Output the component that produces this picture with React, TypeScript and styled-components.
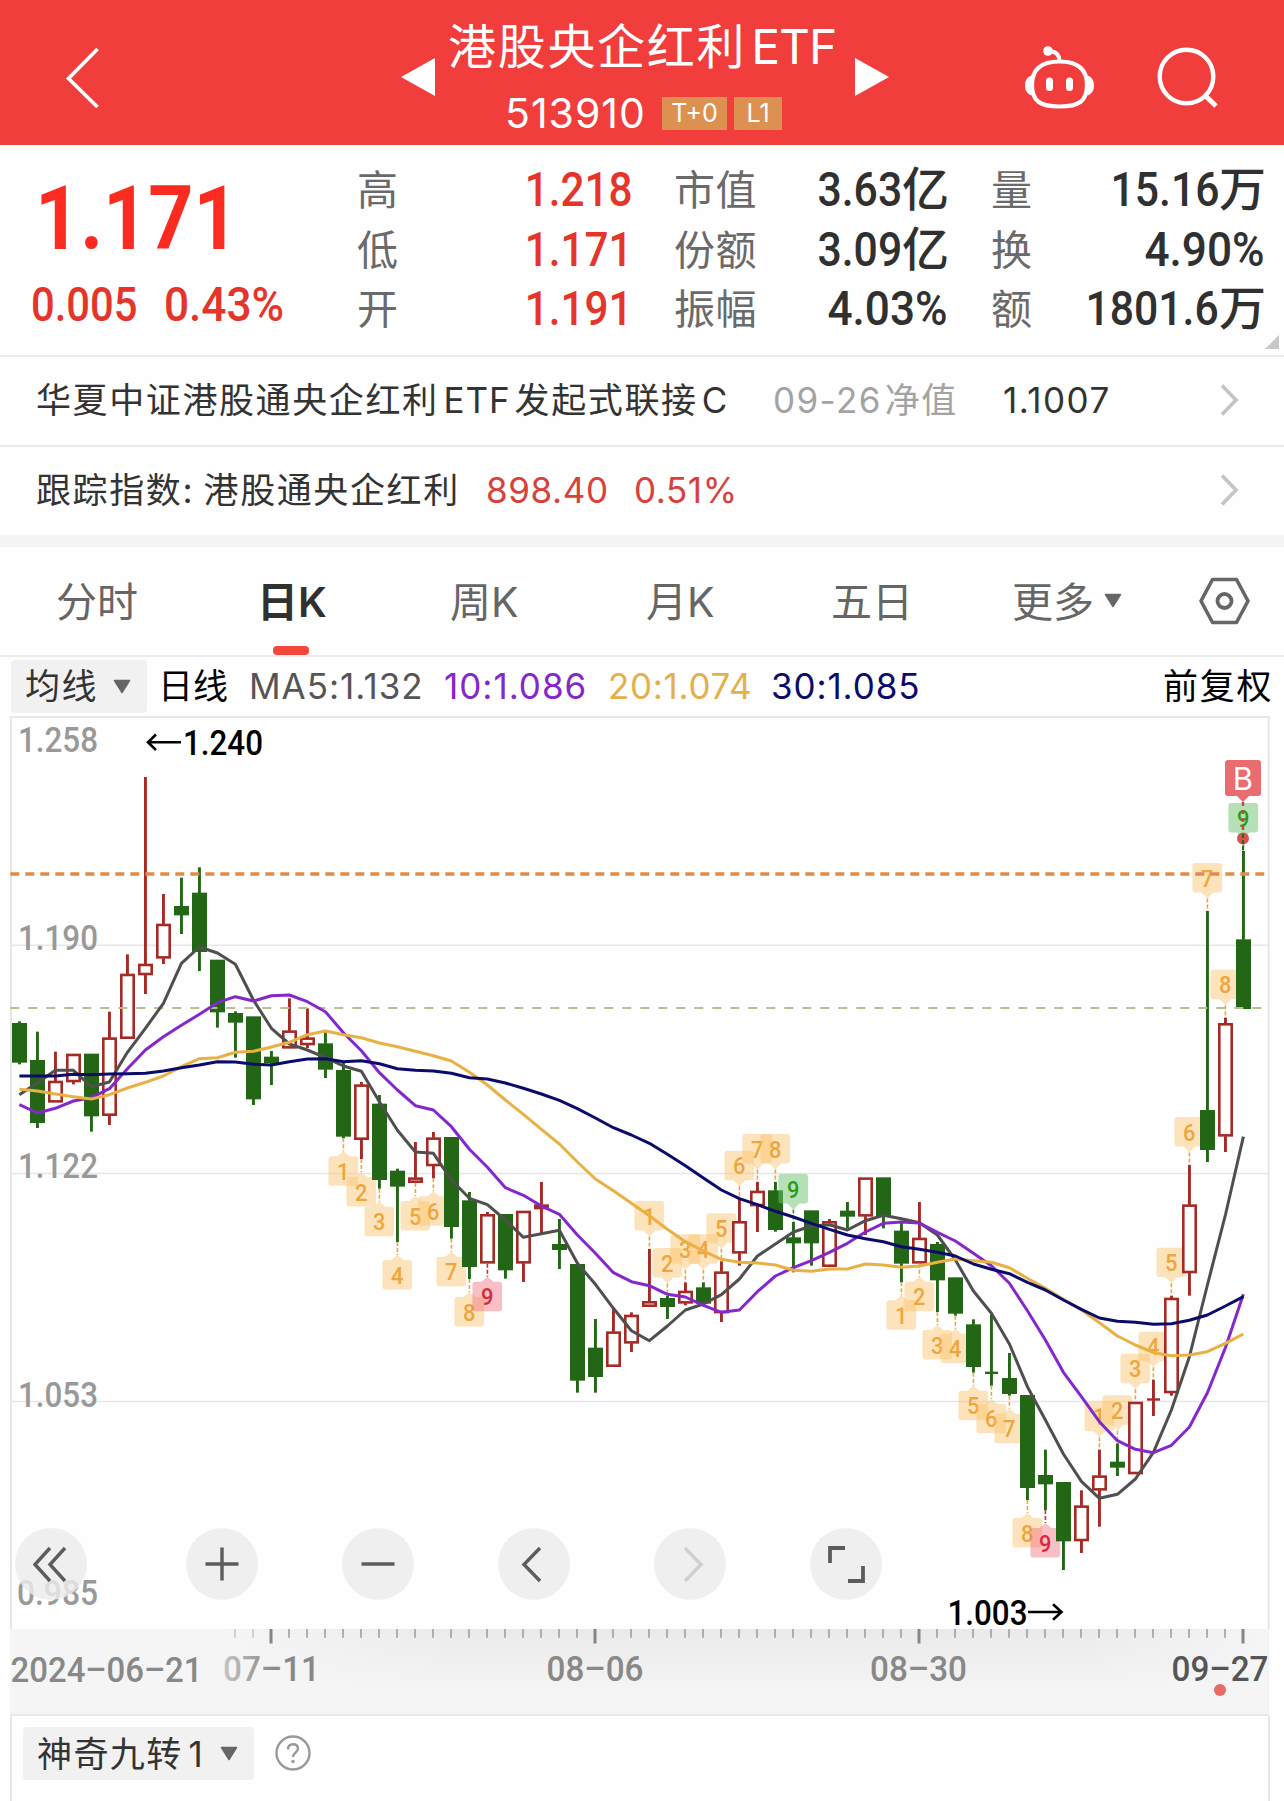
import React from 'react';
import styled, { createGlobalStyle } from 'styled-components';

const UI = `Inter, "Noto Sans CJK SC", sans-serif`;
const NUM = `Roboto, "Noto Sans CJK SC", sans-serif`;
const RED = '#e5352b';

const Global = createGlobalStyle`
  * { box-sizing: border-box; }
  html, body { margin: 0; padding: 0; background: #fefefe; }
  body { font-family: ${UI}; color: #333; }
`;

const Screen = styled.div`
  width: 1284px;
  height: 1801px;
  overflow: hidden;
  display: flex;
  flex-direction: column;
  background: #fefefe;
`;

/* ---------- header ---------- */
const Header = styled.header`
  height: 145px;
  flex: none;
  background: #f13d3c;
  color: #fff;
  display: grid;
  grid-template-columns: 401px 34px 420px 34px 136px 69px 64px 60px;
`;
const HeaderIcon = styled.div<{ $top: number; $left?: number }>`
  padding-top: ${(p) => p.$top}px;
  padding-left: ${(p) => p.$left ?? 0}px;
  svg { display: block; }
`;
const TitleBlock = styled.div`
  padding-left: 13px;
  white-space: nowrap;
`;
const Title = styled.div`
  height: 60px;
  margin-top: 17px;
  line-height: 60px;
  font-size: 48px;
  letter-spacing: 1.7px;
`;
const Latin = styled.span<{ $l: number; $r?: number; $ls?: number }>`
  margin-left: ${(p) => p.$l}px;
  margin-right: ${(p) => p.$r ?? 0}px;
  letter-spacing: ${(p) => p.$ls ?? 0}px;
`;
const CodeRow = styled.div`
  display: grid;
  grid-template-columns: 156px 66px 54px;
  align-items: center;
  height: 33px;
  margin-top: 20px;
  padding-left: 57px;
`;
const Code = styled.div`
  font-size: 41px;
  line-height: 33px;
  letter-spacing: 1px;
`;
const Badge = styled.div`
  height: 33px;
  margin-left: 1px;
  background: #dd9150;
  font-size: 25px;
  line-height: 32px;
  text-align: center;
  & + & { margin-left: 7px; width: 48px; }
`;

/* ---------- quote ---------- */
const Quote = styled.section`
  height: 212px;
  flex: none;
  display: grid;
  grid-template-columns: 357px 275px 42px 274px 43px 274px 1fr;
  border-bottom: 2px solid #ebebeb;
`;
const PriceBlock = styled.div`
  color: ${RED};
  font-family: ${NUM};
  white-space: nowrap;
`;
const Price = styled.div`
  margin: 32px 0 0 35px;
  height: 84px;
  line-height: 84px;
  font-size: 89px;
  font-weight: 700;
  color: #fb2c1f;
  transform: scaleX(0.885);
  transform-origin: 0 50%;
`;
const Changes = styled.div`
  display: grid;
  grid-template-columns: 133px 1fr;
  margin: 20px 0 0 31px;
  height: 48px;
  line-height: 48px;
  font-size: 48px;
  font-weight: 500;
`;
const Digits = styled.span<{ $sx?: number; $origin?: string }>`
  display: inline-block;
  transform: scaleX(${(p) => p.$sx ?? 0.87});
  transform-origin: ${(p) => p.$origin ?? '0'} 50%;
`;
const StatColumn = styled.div`
  padding-top: 15px;
`;
const Stat = styled.div`
  display: flex;
  justify-content: space-between;
  height: 59.5px;
  line-height: 59.5px;
  white-space: nowrap;
`;
const StatLabel = styled.span`
  padding-top: 1px;
  font-size: 41px;
  color: #6a6a6a;
  letter-spacing: 0.6px;
`;
const StatValue = styled.span<{ $up?: boolean }>`
  display: flex;
  font-family: ${NUM};
  font-size: 48px;
  font-weight: 500;
  color: ${(p) => (p.$up ? RED : '#303030')};
`;
const Unit = styled.span`
  font-size: 47px;
  margin-right: -1px;
`;
const Corner = styled.div`
  align-self: end;
  justify-self: end;
  width: 0;
  height: 0;
  margin: 0 6px 6px 0;
  border-left: 14px solid transparent;
  border-bottom: 14px solid #c8c8c8;
`;

/* ---------- info rows ---------- */
const InfoRow = styled.div<{ $cols: string; $h: number; $line?: boolean }>`
  height: ${(p) => p.$h}px;
  flex: none;
  display: grid;
  grid-template-columns: ${(p) => p.$cols};
  align-items: center;
  padding: 0 0 2px 36px;
  font-size: 35px;
  line-height: 40px;
  white-space: nowrap;
  border-bottom: ${(p) => (p.$line ? '2px solid #ebebeb' : '0')};
  svg { display: block; }
`;
const Cell = styled.span<{ $c?: string; $ls?: number }>`
  color: ${(p) => p.$c ?? '#333'};
  letter-spacing: ${(p) => p.$ls ?? 0}px;
`;
const Band = styled.div`
  height: 12px;
  flex: none;
  background: #f4f4f4;
`;

/* ---------- tabs ---------- */
const Tabs = styled.nav`
  height: 110px;
  flex: none;
  display: grid;
  grid-template-columns: 201px 193px 196px 185px 181px 92px 94px 1fr;
  padding-left: 56px;
  border-bottom: 2px solid #ebebeb;
  svg { display: block; }
`;
const Tab = styled.div<{ $on?: boolean }>`
  display: flex;
  flex-direction: column;
  font-size: 41px;
  line-height: 60px;
  padding-top: 25px;
  white-space: nowrap;
  color: ${(p) => (p.$on ? '#303030' : '#666')};
  font-weight: ${(p) => (p.$on ? 600 : 400)};
`;
const TabMark = styled.i`
  width: 36px;
  height: 9px;
  border-radius: 4px;
  margin: 14px 0 0 16px;
  background: #f4473c;
`;
const TabIcon = styled.div<{ $top: number }>`
  padding-top: ${(p) => p.$top}px;
`;

/* ---------- moving average legend ---------- */
const Legend = styled.div`
  height: 59px;
  flex: none;
  display: grid;
  grid-template-columns: 147px 91px 195px 164px 163px 392px auto;
  align-items: center;
  padding: 0 0 1px 11px;
  font-size: 35px;
  line-height: 40px;
  white-space: nowrap;
`;
const Chip = styled.div<{ $w: number }>`
  width: ${(p) => p.$w}px;
  height: 53px;
  padding: 0 16px 0 14px;
  display: flex;
  align-items: center;
  justify-content: space-between;
  background: #f1f1f1;
  border-radius: 4px;
  color: #333;
  font-size: 35px;
  line-height: 40px;
  letter-spacing: 1.4px;
  white-space: nowrap;
`;

/* ---------- chart ---------- */
const ChartArea = styled.section`
  position: relative;
  height: 913px;
  flex: none;
  svg { display: block; overflow: visible; }
`;
const Controls = styled.div`
  position: absolute;
  left: 15px;
  top: 812px;
  display: grid;
  grid-template-columns: 171px 156px 156px 156px 156px 72px;
`;
const RoundButton = styled.div`
  width: 72px;
  height: 72px;
  border-radius: 50%;
  background: rgba(235, 235, 235, 0.82);
`;
const Axis = styled.div`
  height: 87px;
  flex: none;
  margin-left: 10px;
  width: 1259px;
  background: #f5f5f5;
  border-bottom: 2px solid #e9e9e9;
  svg { display: block; overflow: visible; }
`;
const Indicator = styled.section`
  flex: 1;
  margin-left: 10px;
  width: 1260px;
  border-left: 2px solid #e6e6e6;
  border-right: 2px solid #e6e6e6;
  padding: 11px 0 0 11px;
  display: flex;
  gap: 21px;
  align-items: flex-start;
`;
const HelpIcon = styled.svg`
  margin-top: 8px;
`;

type Row = [number, number, number, number, number];
// Each row: direction (1 = rise, 0 = fall), body top, body bottom, high, low.
// Values are in third-pixel units measured from the section's base line.
const section = (base: number, rows: Row[]) =>
  rows.map(([up, t, b, h, l]) => ({
    up: up === 1,
    top: base + t / 3,
    bottom: base + b / 3,
    high: base + h / 3,
    low: base + l / 3,
  }));
const levels = (base: number, v: number[]) => v.map((n) => base + n / 3);

const candles = [
  ...section(710, [
    [0, 939, 1058, 934, 1063], [0, 1050, 1239, 965, 1254], [1, 1112, 1178, 1025, 1178],
    [1, 1031, 1117, 1031, 1123], [0, 1031, 1219, 1031, 1265], [1, 982, 1218, 905, 1245],
    [1, 791, 987, 733, 987], [1, 761, 796, 201, 852], [1, 641, 746, 552, 762],
    [0, 588, 616, 503, 672], [0, 548, 726, 472, 783], [0, 749, 907, 749, 953],
    [0, 909, 938, 904, 1043], [0, 919, 1168, 919, 1185], [0, 1040, 1059, 1023, 1125],
    [1, 961, 1016, 865, 1016], [1, 982, 1006, 895, 1014], [0, 1000, 1079, 967, 1104],
  ]),
  ...section(960, [
    [0, 330, 530, 308, 535], [1, 373, 540, 366, 597], [0, 431, 660, 405, 686],
    [0, 632, 680, 626, 846], [1, 652, 669, 546, 669], [1, 532, 619, 516, 655],
    [0, 531, 801, 531, 836], [0, 721, 921, 696, 957], [1, 762, 911, 756, 911],
    [0, 762, 931, 762, 956], [1, 752, 911, 752, 966], [1, 733, 748, 666, 820],
    [0, 852, 870, 777, 927], [0, 912, 1262, 912, 1298], [0, 1163, 1251, 1077, 1298],
    [1, 1114, 1221, 1048, 1221], [1, 1064, 1151, 1057, 1176], [1, 1023, 1041, 867, 1041],
    [0, 1014, 1041, 1008, 1077], [1, 992, 1031, 967, 1036], [0, 982, 1031, 967, 1031],
    [1, 934, 1060, 904, 1086],
  ]),
  ...section(1100, [
    [1, 363, 461, 296, 497], [1, 272, 319, 246, 396], [0, 271, 390, 246, 395],
    [0, 412, 430, 366, 517], [0, 331, 430, 331, 497], [1, 363, 501, 357, 501],
    [0, 332, 350, 306, 385], [1, 232, 350, 232, 405], [0, 232, 350, 232, 385],
    [0, 392, 491, 362, 547], [1, 413, 491, 306, 491], [0, 432, 541, 426, 636],
    [0, 532, 641, 532, 647], [0, 673, 801, 658, 818], [0, 815, 822, 643, 857],
    [0, 834, 882, 759, 887],
  ]),
  ...section(1180, [
    [0, 645, 924, 645, 960], [0, 885, 913, 809, 990], [0, 906, 1084, 906, 1170],
    [1, 976, 1084, 931, 1119], [1, 886, 932, 809, 1040], [0, 845, 863, 790, 888],
    [1, 665, 883, 665, 883], [1, 655, 662, 599, 708], [1, 353, 640, 347, 647],
    [1, 73, 280, -45, 347],
  ]),
  ...section(740, [
    [0, 1110, 1230, 513, 1266], [1, 849, 1190, 833, 1236], [0, 598, 807, 333, 807],
  ]),
];

const averages: { color: string; y: number[] }[] = [
  {
    color: '#4f4f4f',
    y: [
      ...levels(710, [1154, 1118, 1081, 1081, 1130, 1116, 1027, 955, 880, 760, 711, 729, 763, 870, 955, 1002, 1020, 1043]),
      ...levels(960, [318, 334, 425, 511, 576, 580, 660, 715, 734, 780, 832, 821, 811, 910, 973, 1045, 1112, 1142, 1098, 1050, 1032]),
      ...levels(1100, [584, 537, 468, 432, 396, 378, 374, 390, 362, 346, 356, 368, 405, 480, 573, 640]),
      ...levels(1180, [492, 620, 720, 822, 904, 955, 943, 897, 817, 690, 530, 315, 105, -130]),
    ],
  },
  {
    color: '#8427cb',
    y: [
      ...levels(710, [1184, 1209, 1195, 1173, 1163, 1136, 1076, 1020, 980, 946, 913, 878, 860, 873, 857, 855, 875, 905, 968, 1022, 1088, 1140]),
      ...levels(960, [437, 450, 500, 568, 622, 683, 706, 738, 763, 825, 880, 938, 965, 977, 1003, 1011, 1036]),
      ...levels(1100, [637, 630, 575, 528, 503, 482, 457, 430, 396, 370, 366, 369, 397, 423, 460, 497]),
      ...levels(1180, [310, 392, 480, 577, 650, 725, 782, 808, 818, 796, 741, 638, 503, 343]),
    ],
  },
  {
    color: '#e9b044',
    y: [
      ...levels(710, [1138, 1143, 1152, 1160, 1167, 1154, 1134, 1117, 1098, 1070, 1046, 1043, 1027, 1024, 1011, 997, 974, 963, 974, 983, 999, 1010, 1024]),
      ...levels(960, [287, 303, 337, 375, 420, 463, 508, 552, 606, 657, 692, 730, 767, 808, 845, 873]),
      ...levels(1100, [478, 487, 489, 495, 511, 514, 507, 507, 492, 495, 502, 498, 487, 477, 482, 487]),
      ...levels(1180, [263, 295, 325, 358, 390, 428, 468, 495, 518, 527, 525, 515, 490, 462]),
    ],
  },
  {
    color: '#0b0b6b',
    y: [
      ...levels(710, [1098, 1098, 1098, 1093, 1094, 1092, 1091, 1090, 1083, 1073, 1065, 1055, 1056, 1063, 1065, 1055, 1047, 1046, 1055, 1052, 1061, 1076, 1081]),
      ...levels(960, [333, 340, 353, 357, 369, 385, 402, 421, 446, 474, 503, 525, 550, 583, 617, 654]),
      ...levels(1100, [270, 296, 314, 334, 351, 370, 388, 405, 416, 425, 440, 448, 457, 468, 492, 508]),
      ...levels(1180, [281, 307, 330, 360, 388, 414, 424, 427, 433, 431, 421, 405, 378, 350]),
    ],
  },
];

type Tone = 'o' | 'r' | 'g';
const tones: Record<Tone, { fill: string; ink: string }> = {
  o: { fill: 'rgba(251,190,98,0.42)', ink: '#f0a53c' },
  r: { fill: 'rgba(238,90,110,0.38)', ink: '#d8293b' },
  g: { fill: 'rgba(110,195,110,0.5)', ink: '#2a9a1c' },
};
const marks: Record<number, [string, 'up' | 'down', Tone]> = {};
const addMarks = (from: number, side: 'up' | 'down', last: Tone) => {
  for (let n = 1; n <= 9; n++) marks[from + n - 1] = [String(n), side, n === 9 ? last : 'o'];
};
addMarks(18, 'down', 'r');
addMarks(35, 'up', 'g');
addMarks(49, 'down', 'r');
addMarks(60, 'up', 'g');

const xAt = (i: number) => 19.4 + 18 * i;

const Mark = ({ i }: { i: number }) => {
  const m = marks[i];
  if (!m) return null;
  const [n, side, tone] = m;
  const c = candles[i];
  const x = xAt(i);
  const { fill, ink } = tones[tone];
  const top = side === 'down' ? c.low + 18 : c.high - 18.5 - 29.5;
  const l = x - 15;
  const r = x + 14.7;
  const b = top + 29.5;
  const d =
    side === 'down'
      ? `M${l + 3} ${top}H${x - 6}L${x} ${top - 5}L${x + 6} ${top}H${r - 3}Q${r} ${top} ${r} ${top + 3}V${b - 3}Q${r} ${b} ${r - 3} ${b}H${l + 3}Q${l} ${b} ${l} ${b - 3}V${top + 3}Q${l} ${top} ${l + 3} ${top}Z`
      : `M${l + 3} ${top}H${r - 3}Q${r} ${top} ${r} ${top + 3}V${b - 3}Q${r} ${b} ${r - 3} ${b}H${x + 6}L${x} ${b + 6}L${x - 6} ${b}H${l + 3}Q${l} ${b} ${l} ${b - 3}V${top + 3}Q${l} ${top} ${l + 3} ${top}Z`;
  return (
    <g>
      <line
        x1={x} x2={x}
        y1={side === 'down' ? c.low : b + 6}
        y2={side === 'down' ? top - 5 : c.high}
        stroke={ink} strokeWidth="1.6" strokeDasharray="4 2"
      />
      <path d={d} fill={fill} />
      <text
        x={x - 6.4} y={top + 23.5} textLength="12.4" lengthAdjust="spacingAndGlyphs"
        fontSize="24" fill={ink} fontWeight="500"
      >
        {n}
      </text>
    </g>
  );
};

const Candle = ({ i }: { i: number }) => {
  const c = candles[i];
  const x = xAt(i);
  const cross = c.bottom - c.top < 3;
  const color = c.up ? '#a52a26' : '#236616';
  return (
    <g>
      {c.high < c.top && <rect x={x - 1.4} width="2.9" y={c.high} height={c.top - c.high + 0.5} fill={color} />}
      {c.low > c.bottom && <rect x={x - 1.4} width="2.9" y={c.bottom - 0.5} height={c.low - c.bottom + 0.5} fill={color} />}
      {c.up && !cross ? (
        <rect x={x - 6.1} width="12.4" y={c.top + 1.3} height={Math.max(c.bottom - c.top - 2.6, 1)} fill="#fefefe" stroke={color} strokeWidth="2.6" />
      ) : (
        <rect x={cross ? x - 6.4 : x - 7.4} width={cross ? 13 : 15} y={c.top} height={c.bottom - c.top} fill={color} />
      )}
    </g>
  );
};

const FitText = ({ x, y, w, size, fill, weight = 500, children }: {
  x: number; y: number; w: number; size: number; fill: string; weight?: number; children: string;
}) => (
  <text x={x} y={y} textLength={w} lengthAdjust="spacingAndGlyphs" fontSize={size} fill={fill} fontWeight={weight}>
    {children}
  </text>
);

const KChart = () => (
  <svg width="1284" height="913" viewBox="0 716 1284 913" fontFamily={NUM}>
    <g stroke="#e6e6e8" strokeWidth="2" fill="none">
      <path d="M11 1629V717H1268.7V1629" />
      <path d="M11 945.3H1268M11 1173.5H1268M11 1401.5H1268" strokeWidth="1.4" />
    </g>
    <FitText x={18} y={751.7} w={80} size={35} fill="#999">1.258</FitText>
    <FitText x={18} y={950} w={80} size={35} fill="#999">1.190</FitText>
    <FitText x={18} y={1178.3} w={80} size={35} fill="#999">1.122</FitText>
    <FitText x={18} y={1407} w={80} size={35} fill="#999">1.053</FitText>
    <FitText x={17} y={1605} w={81} size={35} fill="#999">0.985</FitText>
    {candles.map((_, i) => (
      <g key={i}>
        <Candle i={i} />
        <Mark i={i} />
      </g>
    ))}
    <path d="M10.3 874H1266" stroke="#e08c48" strokeWidth="3.4" strokeDasharray="9 6" />
    <path d="M10.3 1008H1263" stroke="#b9bd92" strokeWidth="1.8" strokeDasharray="9 9" />
    {averages.map((a) => (
      <polyline
        key={a.color}
        points={a.y.map((v, i) => `${xAt(i)},${v.toFixed(1)}`).join(' ')}
        fill="none" stroke={a.color} strokeWidth="3" strokeLinejoin="round"
      />
    ))}
    <path d="M156 734.5L148 742.3L156 750M148 742.3H181" fill="none" stroke="#000" strokeWidth="2.6" />
    <FitText x={183} y={755} w={80} size={35} fill="#000">1.240</FitText>
    <FitText x={947.5} y={1625} w={80} size={35} fill="#000">1.003</FitText>
    <path d="M1028 1612H1061M1053 1604.300L1061.500 1612L1053 1619.700" fill="none" stroke="#000" strokeWidth="2.6" />
    <circle cx="1243" cy="838.5" r="6" fill="#d9524f" />
    <path d="M1243 834V850" stroke="#236616" strokeWidth="2" strokeDasharray="4 2" />
    <path d="M1228 760H1258Q1261 760 1261 763V793Q1261 796 1258 796H1249L1243 802L1237 796H1228Q1225 796 1225 793V763Q1225 760 1228 760Z" fill="#e96c71" />
    <path d="M1243 802V830" stroke="#b4503f" strokeWidth="2.4" strokeDasharray="4 4" />
    <text x="1243" y="789.5" fontSize="31" textAnchor="middle" fill="#fff" fontFamily={UI}>B</text>
  </svg>
);

const AxisDrawing = () => (
  <svg width="1259" height="85" viewBox="10 1629 1259 85" fontFamily={NUM}>
    <defs>
      <linearGradient id="shade" x1="0" y1="0" x2="0" y2="1">
        <stop offset="0" stopColor="#eaeaea" />
        <stop offset="0.75" stopColor="#f5f5f5" />
      </linearGradient>
      <linearGradient id="edge" x1="0" y1="0" x2="1" y2="0">
        <stop offset="0" stopColor="#f5f5f5" />
        <stop offset="0.17" stopColor="#f5f5f5" />
        <stop offset="0.36" stopColor="#f5f5f5" stopOpacity="0" />
        <stop offset="0.85" stopColor="#f5f5f5" stopOpacity="0" />
        <stop offset="1" stopColor="#f5f5f5" />
      </linearGradient>
      <linearGradient id="fade" gradientUnits="userSpaceOnUse" x1="222" y1="0" x2="275" y2="0">
        <stop offset="0" stopColor="#c6c6c6" />
        <stop offset="1" stopColor="#888" />
      </linearGradient>
    </defs>
    <rect x="10" y="1629" width="1259" height="85" fill="url(#shade)" />
    <rect x="10" y="1629" width="1259" height="85" fill="url(#edge)" />
    {Array.from({ length: 57 }, (_, k) => k + 12).map((i) => {
      const major = (i - 14) % 18 === 0;
      return (
        <rect
          key={i}
          x={xAt(i) - (major ? 1.9 : 1.2)} y="1629"
          width={major ? 3 : 1.6} height={major ? 14.5 : 8.8}
          fill={major ? '#858585' : '#a0a0a0'} opacity={i < 14 ? 0.5 : 1}
        />
      );
    })}
    <FitText x={10.5} y={1681.5} w={192} size={35} fill="#888">2024–06–21</FitText>
    <FitText x={223} y={1681} w={97} size={35} fill="url(#fade)">07–11</FitText>
    <FitText x={546.5} y={1681} w={97} size={35} fill="#888">08–06</FitText>
    <FitText x={870} y={1681} w={97} size={35} fill="#888">08–30</FitText>
    <FitText x={1171.5} y={1681} w={97} size={35} fill="#555">09–27</FitText>
    <circle cx="1220" cy="1690" r="6" fill="#ea6a66" />
  </svg>
);

const Caret = () => (
  <svg width="18" height="15" viewBox="0 0 18 15">
    <path d="M1.500 1.500H16.500L9 13.500Z" fill="#666" stroke="#666" strokeWidth="1.5" strokeLinejoin="round" />
  </svg>
);
const RowArrow = () => (
  <svg width="22" height="34" viewBox="0 0 22 34">
    <path d="M3 2.5L17 17L3 31.5" fill="none" stroke="#c4c4c4" strokeWidth="3.6" />
  </svg>
);
const Glyph = ({ d, color = '#5c5c5c', w = 3.4 }: { d: string; color?: string; w?: number }) => (
  <svg width="72" height="72" viewBox="0 0 72 72">
    <path d={d} fill="none" stroke={color} strokeWidth={w} />
  </svg>
);

const stats: { up?: boolean; rows: [string, string, string?][] }[] = [
  { up: true, rows: [['高', '1.218'], ['低', '1.171'], ['开', '1.191']] },
  { rows: [['市值', '3.63', '亿'], ['份额', '3.09', '亿'], ['振幅', '4.03%']] },
  { rows: [['量', '15.16', '万'], ['换', '4.90%'], ['额', '1801.6', '万']] },
];

export default function App() {
  return (
    <Screen>
      <Global />
      <Header>
        <HeaderIcon $top={46} $left={63}>
          <svg width="40" height="64" viewBox="0 0 40 64">
            <path d="M34.500 3L5.500 32.500L34.500 61" fill="none" stroke="#fff" strokeWidth="3.600" />
          </svg>
        </HeaderIcon>
        <HeaderIcon $top={58}>
          <svg width="34" height="38" viewBox="0 0 34 38"><path d="M34 0V38L0 19Z" fill="#fff" /></svg>
        </HeaderIcon>
        <TitleBlock>
          <Title>港股央企红利<Latin $l={5} $ls={-1}>ETF</Latin></Title>
          <CodeRow>
            <Code>513910</Code>
            <Badge>T+0</Badge>
            <Badge>L1</Badge>
          </CodeRow>
        </TitleBlock>
        <HeaderIcon $top={58}>
          <svg width="34" height="38" viewBox="0 0 34 38"><path d="M0 0V38L34 19Z" fill="#fff" /></svg>
        </HeaderIcon>
        <span />
        <HeaderIcon $top={45}>
          <svg width="70" height="68" viewBox="0 0 70 68" fill="none" stroke="#fff">
            <circle cx="23" cy="6" r="4.800" fill="#fff" stroke="none" />
            <path d="M24 6C31 6.500 34.500 9.500 34.500 16" strokeWidth="3.800" />
            <path d="M34.500 16.500C51 16.500 62 23 62 40C62 56 54 61.500 34.500 61.500C15 61.500 7 56 7 40C7 23 18 16.500 34.500 16.500Z" strokeWidth="4.200" />
            <path d="M5.500 32Q1 34 1 40.500Q1 47 5.500 49Z" fill="#fff" strokeWidth="2" />
            <path d="M63.500 32Q68 34 68 40.500Q68 47 63.500 49Z" fill="#fff" strokeWidth="2" />
            <path d="M24.500 36V42.500M44.500 36V42.500" strokeWidth="7" strokeLinecap="round" />
          </svg>
        </HeaderIcon>
        <HeaderIcon $top={44} $left={61}>
          <svg width="64" height="68" viewBox="0 0 64 68" fill="none" stroke="#fff" strokeWidth="4.400">
            <circle cx="31.500" cy="32.500" r="26.800" />
            <path d="M50 51.500L61 62" strokeWidth="5" />
          </svg>
        </HeaderIcon>
      </Header>

      <Quote>
        <PriceBlock>
          <Price>1.171</Price>
          <Changes>
            <Digits>0.005</Digits>
            <Digits $sx={0.92}>0.43%</Digits>
          </Changes>
        </PriceBlock>
        {stats.map((col, k) => (
          <React.Fragment key={k}>
            <StatColumn>
              {col.rows.map(([label, value, unit]) => (
                <Stat key={label}>
                  <StatLabel>{label}</StatLabel>
                  <StatValue $up={col.up}>
                    <Digits $origin="100%" $sx={value.endsWith('%') ? 0.92 : unit ? 0.89 : 0.88}>{value}</Digits>
                    {unit && <Unit>{unit}</Unit>}
                  </StatValue>
                </Stat>
              ))}
            </StatColumn>
            {k < 2 && <span />}
          </React.Fragment>
        ))}
        <Corner />
      </Quote>

      <InfoRow $cols="737px 230px 216px 1fr" $h={90} $line>
        <Cell $ls={1.6}>
          华夏中证港股通央企红利<Latin $l={5} $r={4} $ls={0.9}>ETF</Latin>发起式联接<Latin $l={4}>C</Latin>
        </Cell>
        <Cell $c="#a3a3a3" $ls={1.4}>09-26<Latin $l={3} $ls={1.4}>净值</Latin></Cell>
        <Cell $ls={1.5}>1.1007</Cell>
        <RowArrow />
      </InfoRow>
      <InfoRow $cols="450px 148px 585px 1fr" $h={88}>
        <Cell $ls={1.6}>跟踪指数:<Latin $l={-2} $ls={1.6}> 港股通央企红利</Latin></Cell>
        <Cell $c="#d8403a" $ls={0.6}>898.40</Cell>
        <Cell $c="#d8403a" $ls={0.6}>0.51%</Cell>
        <RowArrow />
      </InfoRow>
      <Band />

      <Tabs>
        <Tab>分时</Tab>
        <Tab $on>
          日K
          <TabMark />
        </Tab>
        <Tab>周K</Tab>
        <Tab>月K</Tab>
        <Tab>五日</Tab>
        <Tab>更多</Tab>
        <TabIcon $top={46}><Caret /></TabIcon>
        <TabIcon $top={30}>
          <svg width="54" height="48" viewBox="0 0 54 48" fill="none" stroke="#666">
            <path d="M14.500 2.500H38.500L50 24L38.500 45.500H14.500L3 24Z" strokeWidth="3.600" strokeLinejoin="round" />
            <circle cx="26.500" cy="24" r="7" strokeWidth="3.800" />
          </svg>
        </TabIcon>
      </Tabs>

      <Legend>
        <Chip $w={136}>均线<Caret /></Chip>
        <Cell $c="#000">日线</Cell>
        <Cell $c="#555" $ls={1}>MA5:1.132</Cell>
        <Cell $c="#8427cb" $ls={1}>10:1.086</Cell>
        <Cell $c="#e4b04e" $ls={0.7}>20:1.074</Cell>
        <Cell $c="#0b0b6b" $ls={0.9}>30:1.085</Cell>
        <Cell $c="#000" $ls={1.8}>前复权</Cell>
      </Legend>

      <ChartArea>
        <KChart />
        <Controls>
          <RoundButton><Glyph d="M35 20L20 36.500L35 53M50 20L35 36.500L50 53" /></RoundButton>
          <RoundButton><Glyph d="M36 19.500V52.500M19.500 36H52.500" /></RoundButton>
          <RoundButton><Glyph d="M19.500 36H52.500" /></RoundButton>
          <RoundButton><Glyph d="M42 20L26 36.500L42 53" /></RoundButton>
          <RoundButton><Glyph color="#cfcfcf" d="M31 20L47 36.500L31 53" /></RoundButton>
          <RoundButton><Glyph w={3.8} d="M20 35V20H35M38 53H53V38" /></RoundButton>
        </Controls>
      </ChartArea>
      <Axis><AxisDrawing /></Axis>
      <Indicator>
        <Chip $w={231}><span>神奇九转<Latin $l={6}>1</Latin></span><Caret /></Chip>
        <HelpIcon width="36" height="36" viewBox="0 0 36 36" fill="none" stroke="#999" strokeWidth="2.400">
          <circle cx="18" cy="18" r="16.500" />
          <path d="M13 14.500C13 11 15 9.200 18 9.200S23 11 23 13.800C23 17.500 18 17.600 18 22" />
          <circle cx="18" cy="26.500" r="1.700" fill="#999" stroke="none" />
        </HelpIcon>
      </Indicator>
    </Screen>
  );
}
